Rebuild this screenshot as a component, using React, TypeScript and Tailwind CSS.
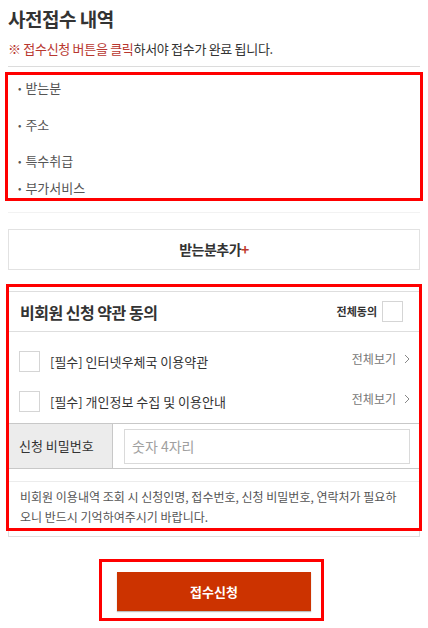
import { useState } from 'react';

const items = [
  { label: '받는분', className: 'h-[37px]' },
  { label: '주소', className: 'h-[36px]' },
  { label: '특수취급', className: 'h-[27px]' },
  { label: '부가서비스', className: 'h-[24px]' },
];

const terms = ['[필수] 인터넷우체국 이용약관', '[필수] 개인정보 수집 및 이용안내'];

function Box({ checked, onClick }: { checked: boolean; onClick: () => void }) {
  return (
    <button
      onClick={onClick}
      className={`w-[21px] h-[21px] border border-[#d5d5d5] shrink-0 ${checked ? 'bg-[#cc3300]' : 'bg-white'}`}
    />
  );
}

export default function App() {
  const [agree, setAgree] = useState([false, false]);
  const [all, setAll] = useState(false);
  const [pw, setPw] = useState('');

  return (
    <div className="relative w-[428px] h-[628px] bg-white overflow-hidden font-['Noto_Sans_CJK_KR','Noto_Sans',sans-serif] text-[#333]">
      <div className="px-2 pt-[5px]">
        <h2 className="text-[19px] font-bold leading-[28px] tracking-[-0.5px]">사전접수 내역</h2>
        <p className="mt-[6px] text-[13px] leading-[20px] tracking-[-0.3px]">
          <span className="text-[#b8372f]">※ 접수신청 버튼을 클릭</span>하서야 접수가 완료 됩니다.
        </p>
        <div className="mt-[7px] border-t border-[#dcdcdc]" />

        {/* 받는분 목록 */}
        <ul className="pt-[10px] pb-[11px] border-b border-[#f2f2f2] text-[13px] text-[#555]">
          {items.map((it) => (
            <li key={it.label} className={`flex items-start pl-[10px] leading-[22px] ${it.className}`}>
              <span className="mr-[4px] text-[10px]">•</span>
              {it.label}
            </li>
          ))}
        </ul>

        <button className="mt-[16px] w-full h-[41px] border border-[#e2e2e2] flex items-center justify-center text-[14px] font-bold tracking-[-0.5px]">
          받는분추가<span className="text-[#c0392b] font-bold">+</span>
        </button>

        {/* 약관 동의 */}
        <div className="mt-[21px] border border-[#dedede]">
          <div className="h-[40px] flex items-center justify-between pl-[11px] pr-[16px] border-b border-[#dedede]">
            <span className="text-[16px] font-bold tracking-[-0.5px]">비회원 신청 약관 동의</span>
            <label className="flex items-center gap-[5px] text-[11px] font-bold">
              전체동의
              <Box
                checked={all}
                onClick={() => {
                  setAll(!all);
                  setAgree([!all, !all]);
                }}
              />
            </label>
          </div>
          <div className="pt-[19px] pb-[11px] flex flex-col gap-[19px]">
            {terms.map((t, i) => (
              <div key={t} className="h-[21px] flex items-start pl-[10px] pr-[9px]">
                <Box
                  checked={agree[i]}
                  onClick={() => setAgree(agree.map((v, j) => (j === i ? !v : v)))}
                />
                <span className="ml-[10px] text-[13px] leading-[21px] flex-1">{t}</span>
                <span className="text-[12px] text-[#777] leading-[16px] flex items-center gap-[8px]">
                  전체보기
                  <svg width="6" height="10" viewBox="0 0 6 10" fill="none">
                    <path d="M1 1l4 4-4 4" stroke="#888" strokeWidth="1" />
                  </svg>
                </span>
              </div>
            ))}
          </div>
          <div className="flex h-[46px] border-t border-b border-[#c8c8c8]">
            <div className="w-[104px] bg-[#ececec] border-r border-[#c8c8c8] flex items-center pl-[10px] text-[13px]">
              신청 비밀번호
            </div>
            <div className="flex-1 flex items-center pl-[11px] pr-[9px]">
              <input
                value={pw}
                onChange={(e) => setPw(e.target.value)}
                placeholder="숫자 4자리"
                className="w-full h-[35px] border border-[#dadada] px-[7px] text-[14px] placeholder-[#a0a0a0] outline-none"
              />
            </div>
          </div>
          <p className="mt-[12px] border-t border-[#ececec] pl-[11px] pr-[14px] pt-[5px] pb-[9px] text-[12px] leading-[20px] text-[#555] break-all">
            비회원 이용내역 조회 시 신청인명, 접수번호, 신청 비밀번호, 연락처가 필요하오니 반드시 기억하여주시기 바랍니다.
          </p>
        </div>

        <div className="mt-[35px] flex justify-center">
          <button className="w-[194px] h-[39px] bg-[#cc3300] text-white text-[13px] font-bold shadow-[0_1px_1px_rgba(0,0,0,0.25)]">
            접수신청
          </button>
        </div>
      </div>

      {/* 표시 박스 */}
      <div className="absolute left-[5px] top-[72px] w-[418px] h-[129px] border-[3px] border-[#ff0000] pointer-events-none" />
      <div className="absolute left-[6px] top-[284px] w-[416px] h-[247px] border-[3px] border-[#ff0000] pointer-events-none" />
      <div className="absolute left-[99px] top-[559px] w-[225px] h-[62px] border-[3px] border-[#ff0000] pointer-events-none" />
    </div>
  );
}
